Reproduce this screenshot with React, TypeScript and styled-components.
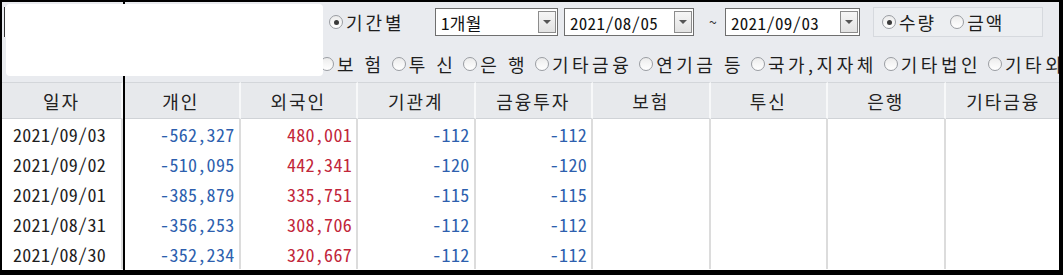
import React from 'react'
import styled, { createGlobalStyle } from 'styled-components'

const GlobalStyle = createGlobalStyle`
  html, body {
    margin: 0;
    padding: 0;
    background: #ffffff;
  }
  * {
    box-sizing: border-box;
  }
`

const KR = `'Noto Sans CJK KR', 'Noto Sans', sans-serif`

const Frame = styled.div`
  position: relative;
  width: 1063px;
  height: 275px;
  overflow: hidden;
  border-top: 2px solid #000;
  border-left: 2px solid #000;
  border-right: 4px solid #000;
  border-bottom: 5px solid #000;
  background: #e9ebef;
  display: flex;
  flex-direction: column;
  font-family: ${KR};
  color: #222;
`

const ToolRow = styled.div<{ $h: number; $pt?: number }>`
  display: flex;
  align-items: center;
  height: ${(p) => p.$h}px;
  padding-top: ${(p) => p.$pt ?? 0}px;
  flex-shrink: 0;
  white-space: nowrap;
`

const Slot = styled.div<{ $w: number }>`
  display: flex;
  align-items: center;
  width: ${(p) => p.$w}px;
  flex-shrink: 0;
`

const HiddenInput = styled.div`
  width: 312px;
  height: 30px;
  margin-left: 2px;
  background: #fff;
  border-left: 1px solid #333;
`

const RadioWrap = styled.label<{ $ml: number; $ls: number }>`
  display: inline-flex;
  align-items: center;
  margin-left: ${(p) => p.$ml}px;
  font-size: 18px;
  letter-spacing: ${(p) => p.$ls}px;
  line-height: 1;
  color: #1e1e1e;
`

const Circle = styled.span<{ $on?: boolean }>`
  position: relative;
  width: 14px;
  height: 14px;
  margin-right: 3px;
  border-radius: 50%;
  border: 1px solid #9a9da2;
  background: linear-gradient(#ececec, #ffffff);
  flex-shrink: 0;

  &::after {
    content: '';
    display: ${(p) => (p.$on ? 'block' : 'none')};
    position: absolute;
    left: 50%;
    top: 50%;
    width: 5px;
    height: 5px;
    margin: -2.5px 0 0 -2.5px;
    border-radius: 50%;
    background: #3a3a3a;
  }
`

const Combo = styled.div<{ $w: number }>`
  display: flex;
  align-items: center;
  width: ${(p) => p.$w}px;
  height: 28px;
  flex-shrink: 0;
  background: #fff;
  border: 1px solid #6f6f6f;
  padding: 0 1px 0 5px;
`

const ComboText = styled.span`
  flex: 1;
  font-size: 17px;
  font-feature-settings: 'hwid';
  letter-spacing: 0.3px;
  color: #111;
`

const ComboArrow = styled.span`
  display: flex;
  align-items: center;
  justify-content: center;
  width: 18px;
  height: 22px;
  border: 1px solid #8c8c8c;
  background: linear-gradient(#f6f6f6, #e2e2e2);

  &::before {
    content: '';
    border-left: 4px solid transparent;
    border-right: 4px solid transparent;
    border-top: 4px solid #555;
  }
`

const Tilde = styled.span`
  padding-left: 15px;
  font-size: 14px;
  color: #333;
`

const GroupBox = styled.div`
  display: flex;
  align-items: center;
  width: 170px;
  height: 30px;
  border: 1px solid #d6d9de;
  background: #eceef1;
`

const Table = styled.div`
  display: grid;
  grid-template-columns: 121px repeat(8, 117.5px);
  grid-template-rows: 37px repeat(5, 30px);
  flex: 1;
  background: #fff;
  font-family: ${KR};
  font-size: 18px;
`

const HeadCell = styled.div`
  display: flex;
  align-items: center;
  justify-content: center;
  background: #e7e9ec;
  border-top: 1px solid #d3d6da;
  border-right: 2px solid #f7f8f9;
  border-bottom: 1px solid #d0d3d7;
  letter-spacing: 2px;
  color: #222;
`

const Cell = styled.div<{ $tone?: 'blue' | 'red' | 'plain'; $center?: boolean }>`
  display: flex;
  align-items: center;
  justify-content: ${(p) => (p.$center ? 'center' : 'flex-end')};
  padding-right: 4px;
  border-right: 2px solid #dcdcdc;
  font-feature-settings: 'hwid';
  letter-spacing: 0.3px;
  color: ${(p) =>
    p.$tone === 'blue' ? '#2d5fae' : p.$tone === 'red' ? '#c2263a' : '#1e1e1e'};
`

const Redaction = styled.div`
  position: absolute;
  left: 4px;
  top: 2px;
  width: 317px;
  height: 72px;
  background: #fff;
  border-radius: 4px;
`

const Marker = styled.div`
  position: absolute;
  left: 121px;
  top: -2px;
  width: 2px;
  height: 280px;
  background: #000;
`

const headers = ['일자', '개인', '외국인', '기관계', '금융투자', '보험', '투신', '은행', '기타금융']

const rows = [
  { date: '2021/09/03', indiv: '-562,327', foreign: '480,001', inst: '-112', fin: '-112' },
  { date: '2021/09/02', indiv: '-510,095', foreign: '442,341', inst: '-120', fin: '-120' },
  { date: '2021/09/01', indiv: '-385,879', foreign: '335,751', inst: '-115', fin: '-115' },
  { date: '2021/08/31', indiv: '-356,253', foreign: '308,706', inst: '-112', fin: '-112' },
  { date: '2021/08/30', indiv: '-352,234', foreign: '320,667', inst: '-112', fin: '-112' },
]

const investorTypes = ['보 험', '투 신', '은 행', '기타금융', '연기금 등', '국가,지자체', '기타법인', '기타외국인']

type RadioProps = { label: string; on?: boolean; ml?: number; ls?: number }

const Radio = ({ label, on, ml = 0, ls = 0 }: RadioProps) => (
  <RadioWrap $ml={ml} $ls={ls}>
    <Circle $on={on} />
    {label}
  </RadioWrap>
)

export default function App() {
  return (
    <>
      <GlobalStyle />
      <Frame>
        <Marker />
        <ToolRow $h={40}>
          <Slot $w={327}>
            <HiddenInput />
          </Slot>
          <Slot $w={106}>
            <Radio label='기간별' on ls={3} />
          </Slot>
          <Combo $w={123}>
            <ComboText>1개월</ComboText>
            <ComboArrow />
          </Combo>
          <Slot $w={6} />
          <Combo $w={130}>
            <ComboText>2021/08/05</ComboText>
            <ComboArrow />
          </Combo>
          <Slot $w={31}>
            <Tilde>~</Tilde>
          </Slot>
          <Combo $w={135}>
            <ComboText>2021/09/03</ComboText>
            <ComboArrow />
          </Combo>
          <Slot $w={13} />
          <GroupBox>
            <Radio label='수량' on ml={8} ls={2} />
            <Radio label='금액' ml={14} ls={2} />
          </GroupBox>
        </ToolRow>
        <ToolRow $h={40} $pt={4}>
          <Slot $w={318} />
          {investorTypes.map((t, i) => (
            <Radio key={t} label={t} ml={i === 0 ? 0 : 7} ls={3.5} />
          ))}
        </ToolRow>
        <Table>
          {headers.map((h) => (
            <HeadCell key={h}>{h}</HeadCell>
          ))}
          {rows.map((r) => (
            <React.Fragment key={r.date}>
              <Cell $center $tone='plain'>{r.date}</Cell>
              <Cell $tone='blue'>{r.indiv}</Cell>
              <Cell $tone='red'>{r.foreign}</Cell>
              <Cell $tone='blue'>{r.inst}</Cell>
              <Cell $tone='blue'>{r.fin}</Cell>
              <Cell />
              <Cell />
              <Cell />
              <Cell />
            </React.Fragment>
          ))}
        </Table>
        <Redaction />
      </Frame>
    </>
  )
}
